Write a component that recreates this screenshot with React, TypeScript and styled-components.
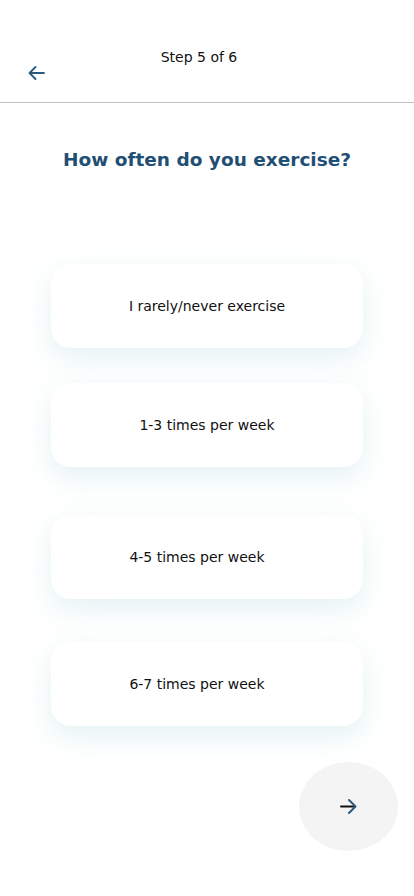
import React, { useState } from "react";
import styled, { createGlobalStyle } from "styled-components";

const GlobalStyle = createGlobalStyle`
  html, body {
    margin: 0;
    padding: 0;
    background: #ffffff;
  }
  body {
    font-family: "DejaVu Sans", "Liberation Sans", sans-serif;
    color: #111111;
  }
`;

const options = [
  { label: "I rarely/never exercise", space: 92, shift: 0 },
  { label: "1-3 times per week", space: 35, shift: 0 },
  { label: "4-5 times per week", space: 48, shift: 20 },
  { label: "6-7 times per week", space: 43, shift: 20 }
];

export default function App() {
  const [selected, setSelected] = useState<number | null>(null);

  return (
    <Page>
      <GlobalStyle />
      <Header>
        <Step>Step 5 of 6</Step>
        <BackButton aria-label="Back">
          <svg width="17" height="14" viewBox="0 0 17 14" fill="none">
            <path
              d="M16 7H1.5M7.5 1L1.5 7l6 6"
              stroke="#2b5a7e"
              strokeWidth="1.8"
              strokeLinecap="round"
              strokeLinejoin="round"
            />
          </svg>
        </BackButton>
      </Header>

      <Title>How often do you exercise?</Title>

      <Options>
        {options.map((opt, i) => (
          <Option
            key={opt.label}
            $space={opt.space}
            $shift={opt.shift}
            $active={selected === i}
            onClick={() => setSelected(i)}
          >
            {opt.label}
          </Option>
        ))}
      </Options>

      <Footer>
        <NextButton aria-label="Next">
          <svg width="17" height="17" viewBox="0 0 17 17" fill="none">
            <path d="M1 8.5h14" stroke="#111" strokeWidth="2" strokeLinecap="round" />
            <path
              d="M9 2l6.5 6.5L9 15"
              stroke="#2b5a7e"
              strokeWidth="2"
              strokeLinecap="round"
              strokeLinejoin="round"
            />
          </svg>
        </NextButton>
      </Footer>
    </Page>
  );
}

const Page = styled.div`
  width: 414px;
  min-height: 896px;
  display: flex;
  flex-direction: column;
`;

const Header = styled.header`
  display: flex;
  flex-direction: column;
  padding-top: 47px;
  height: 103px;
  box-sizing: border-box;
  border-bottom: 1px solid #c4c4c4;
`;

const Step = styled.div`
  text-align: center;
  padding-right: 16px;
  font-size: 14px;
  line-height: 20px;
  color: #111;
`;

const BackButton = styled.button`
  align-self: flex-start;
  margin: -1px 0 0 27px;
  padding: 0;
  border: none;
  background: none;
  width: 18px;
  height: 14px;
  display: flex;
  align-items: center;
  justify-content: center;
  cursor: pointer;
`;

const Title = styled.h1`
  margin: 45px 0 0;
  text-align: center;
  font-size: 18.5px;
  line-height: 24px;
  font-weight: 700;
  color: #1f4f75;
`;

const Options = styled.div`
  display: flex;
  flex-direction: column;
  align-items: center;
`;

const Option = styled.button<{ $space: number; $shift: number; $active: boolean }>`
  margin-top: ${(p) => p.$space}px;
  width: 312px;
  height: 84px;
  padding: 0 ${(p) => p.$shift}px 0 0;
  border: none;
  border-radius: 20px;
  background: ${(p) => (p.$active ? "#eef6f8" : "#ffffff")};
  box-shadow: 0 10px 28px rgba(150, 205, 212, 0.26);
  font-family: inherit;
  font-size: 14px;
  color: #111;
  cursor: pointer;
`;

const Footer = styled.div`
  display: flex;
  justify-content: flex-end;
  padding: 36px 16px 0 0;
`;

const NextButton = styled.button`
  width: 99px;
  height: 89px;
  border-radius: 50%;
  border: none;
  background: #f4f4f4;
  display: flex;
  align-items: center;
  justify-content: center;
  cursor: pointer;
`;
